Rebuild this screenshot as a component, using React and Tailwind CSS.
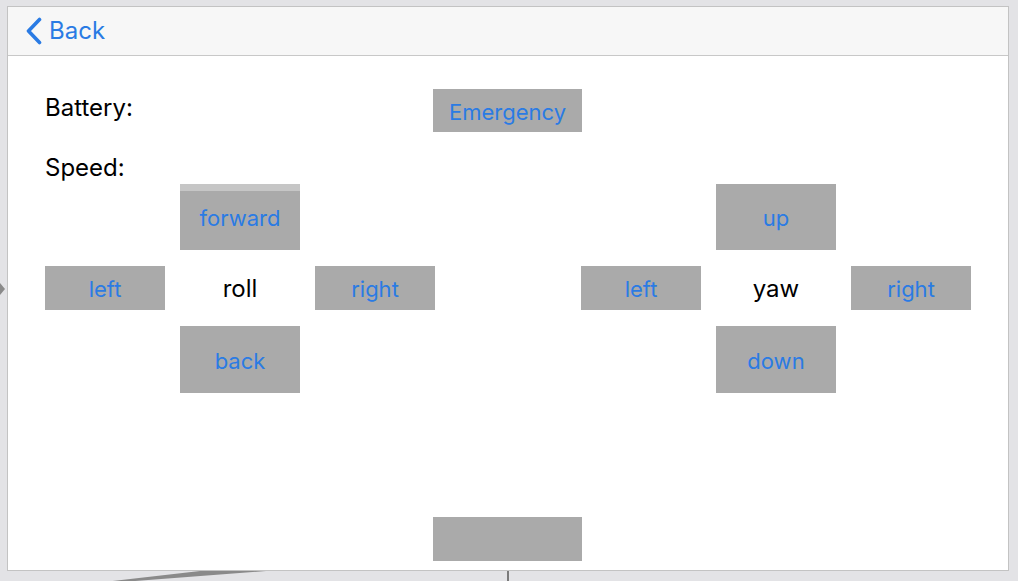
import React from "react";

const font = { fontFamily: "Inter, 'Liberation Sans', sans-serif" };

function Btn({ label, className = "" }) {
  return (
    <div
      className={`bg-[#aaaaaa] flex items-center justify-center pt-[3px] text-[22px] text-[#2a7be4] ${className}`}
    >
      {label}
    </div>
  );
}

function Pad({ top, bottom, center, topStrip }) {
  return (
    <div className="grid grid-cols-[120px_120px_120px] grid-rows-[66px_44px_67px] gap-x-[15px] gap-y-[16px]">
      <div />
      <div className="relative">
        <Btn label={top} className="h-full" />
        {topStrip && <div className="absolute left-0 top-0 w-full h-[7px] bg-[#c6c6c6]" />}
      </div>
      <div />
      <Btn label="left" />
      <div className="flex items-center justify-center pt-[2px] text-[24px] text-black">{center}</div>
      <Btn label="right" />
      <div />
      <Btn label={bottom} />
      <div />
    </div>
  );
}

export default function App() {
  return (
    <div className="relative w-[1018px] h-[581px] overflow-hidden bg-[#e3e3e6] pt-[6px] pl-[7px]" style={font}>
      <div className="w-[1002px] h-[565px] border border-[#c3c3c3] bg-white flex flex-col">
        {/* nav bar */}
        <div className="h-[49px] shrink-0 bg-[#f7f7f7] border-b border-[#c8c8c8] flex items-center pl-[17px]">
          <svg width="18" height="28" viewBox="0 0 18 28" className="mr-[6px]">
            <path d="M14.5 2.5 L3.5 14 L14.5 25.5" fill="none" stroke="#2a7be4" strokeWidth="3.6" strokeLinecap="round" strokeLinejoin="round" />
          </svg>
          <span className="text-[24px] text-[#2a7be4] leading-none">Back</span>
        </div>

        {/* content */}
        <div className="flex-1 pl-[37px]">
          <div className="h-[128px] flex items-start">
            <div className="w-[115px] pt-[37px] text-[24px] text-black">
              <div className="h-[30px] leading-[30px]">Battery:</div>
              <div className="h-[30px] leading-[30px] mt-[30px]">Speed:</div>
            </div>
            <Btn label="Emergency" className="ml-[273px] mt-[33px] w-[149px] h-[43px]" />
          </div>

          <div className="flex">
            <Pad top="forward" bottom="back" center="roll" topStrip />
            <div className="ml-[146px]">
              <Pad top="up" bottom="down" center="yaw" />
            </div>
          </div>

          <Btn label="" className="mt-[124px] ml-[388px] w-[149px] h-[44px]" />
        </div>
      </div>

      {/* storyboard connectors */}
      <svg className="absolute inset-0 pointer-events-none" width="1018" height="581">
        <polygon points="0,283 5,289 0,295" fill="#8a8a8a" />
        <polygon points="104,582 122,582 266,571 200,571" fill="#8a8a8a" />
        <rect x="507" y="571" width="2" height="10" fill="#7a7a7a" />
      </svg>
    </div>
  );
}
